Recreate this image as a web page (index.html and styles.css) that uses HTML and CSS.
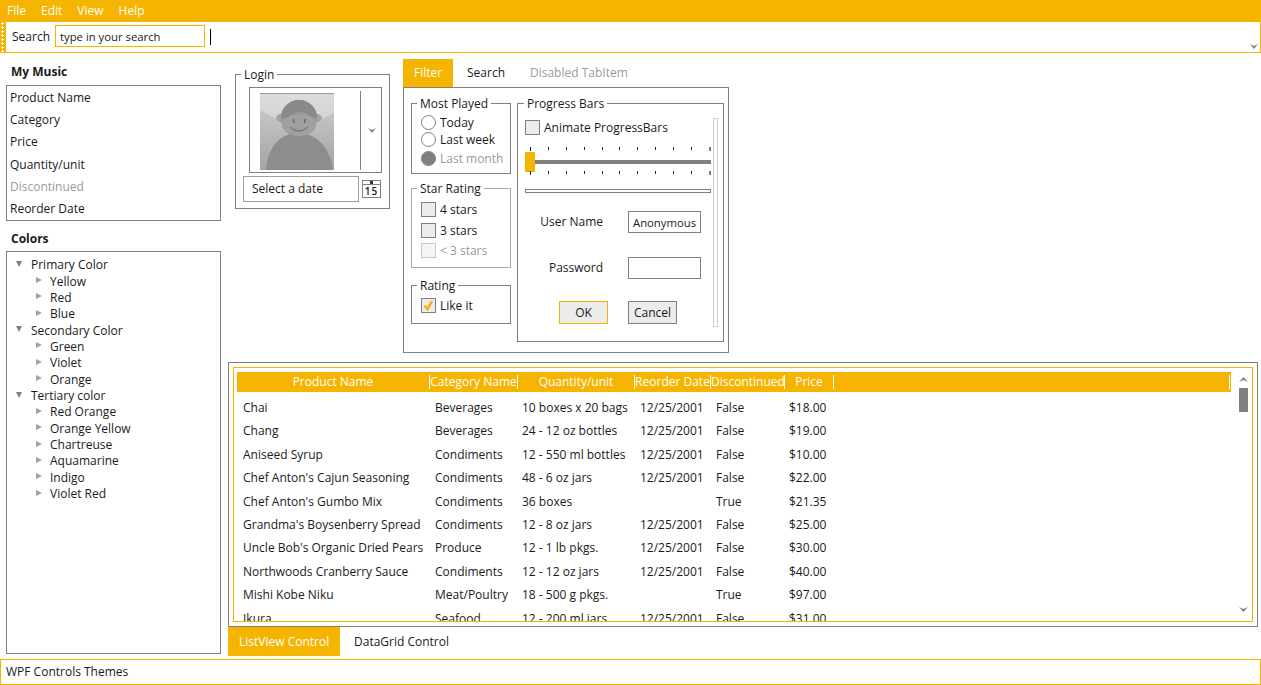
FILE: index.html
```html
<!DOCTYPE html>
<html lang="en">
<head>
<meta charset="utf-8">
<title>WPF Controls Themes</title>
<link rel="stylesheet" href="styles.css">
</head>
<body>
<div class="app">
  <nav class="menu"><span>File</span><span>Edit</span><span>View</span><span>Help</span></nav>
  <div class="toolbar">
    <div class="grip"></div>
    <label class="search-label">Search</label>
    <div class="search-box">type in your search</div>
    <div class="caret"></div>
    <svg class="tb-chevron" width="8" height="5" viewBox="0 0 8 5"><path d="M0 0 L4 2 L8 0 L4 5Z" fill="#808080"/></svg>
  </div>
  <main class="main">
    <aside class="side">
      <h2 class="side-title">My Music</h2>
      <ul class="listbox">
        <li>Product Name</li><li>Category</li><li>Price</li><li>Quantity/unit</li><li class="off">Discontinued</li><li>Reorder Date</li>
      </ul>
      <h2 class="side-title colors-title">Colors</h2>
      <div class="tree">
        <div class="node"><i class="tri-down"></i>Primary Color</div>
        <div class="node child"><i class="tri-right"></i>Yellow</div>
        <div class="node child"><i class="tri-right"></i>Red</div>
        <div class="node child"><i class="tri-right"></i>Blue</div>
        <div class="node"><i class="tri-down"></i>Secondary Color</div>
        <div class="node child"><i class="tri-right"></i>Green</div>
        <div class="node child"><i class="tri-right"></i>Violet</div>
        <div class="node child"><i class="tri-right"></i>Orange</div>
        <div class="node"><i class="tri-down"></i>Tertiary color</div>
        <div class="node child"><i class="tri-right"></i>Red Orange</div>
        <div class="node child"><i class="tri-right"></i>Orange Yellow</div>
        <div class="node child"><i class="tri-right"></i>Chartreuse</div>
        <div class="node child"><i class="tri-right"></i>Aquamarine</div>
        <div class="node child"><i class="tri-right"></i>Indigo</div>
        <div class="node child"><i class="tri-right"></i>Violet Red</div>
      </div>
    </aside>
    <section class="content">
      <div class="top-row">
        <fieldset class="group login">
          <legend>Login</legend>
          <div class="combo">
            <svg class="avatar" width="74" height="77" viewBox="0 0 74 77">
              <defs>
                <linearGradient id="bg" x1="0" y1="0" x2="0" y2="1"><stop offset="0" stop-color="#dcdcdc"/><stop offset="1" stop-color="#c4c4c4"/></linearGradient>
                <linearGradient id="bg2" x1="0" y1="0" x2="0" y2="1"><stop offset="0" stop-color="#c6c6c6"/><stop offset="1" stop-color="#a4a4a4"/></linearGradient>
              </defs>
              <rect width="74" height="77" fill="url(#bg)"/>
              <path d="M0 17 Q37 42 74 20 V77 H0Z" fill="url(#bg2)"/>
              <rect width="74" height="1" fill="#999"/>
              <path d="M6 77 C8 52 22 40 38 40 C54 40 70 52 73 77Z" fill="#8d8d8d"/>
              <ellipse cx="39" cy="25" rx="23" ry="7" fill="#a2a2a2"/>
              <circle cx="39" cy="25" r="18" fill="#979797"/>
              <path d="M21 25 A18 18 0 0 1 57 25 C50 25 45 16 36 19 C34 23 28 25 21 25Z" fill="#898989"/>
              <ellipse cx="39" cy="32" rx="17" ry="11" fill="#a0a0a0"/>
              <path d="M30 34 Q39 42 48 34" fill="none" stroke="#7a7a7a" stroke-width="1.200"/>
              <rect x="33" y="26" width="1.500" height="4" fill="#666"/>
              <rect x="44" y="26" width="1.500" height="4" fill="#666"/>
            </svg>
            <div class="combo-sep"></div>
            <svg class="combo-chevron" width="8" height="5" viewBox="0 0 8 5"><path d="M0 0 L4 2 L8 0 L4 5Z" fill="#808080"/></svg>
          </div>
          <div class="date-row">
            <div class="date-input">Select a date</div>
            <div class="calendar"><span class="cal-top"></span><span class="cal-num">15</span></div>
          </div>
        </fieldset>
        <div class="tabs">
          <div class="tab-strip"><span class="tab active">Filter</span><span class="tab">Search</span><span class="tab off">Disabled TabItem</span></div>
          <div class="tab-panel">
            <div class="panel-left">
              <fieldset class="group most">
                <legend>Most Played</legend>
                <div class="opt r1"><i class="radio"></i>Today</div>
                <div class="opt r2"><i class="radio"></i>Last week</div>
                <div class="opt r3 off"><i class="radio filled"></i>Last month</div>
              </fieldset>
              <fieldset class="group stars">
                <legend>Star Rating</legend>
                <div class="opt s1"><i class="check"></i>4 stars</div>
                <div class="opt s2"><i class="check"></i>3 stars</div>
                <div class="opt s3 off"><i class="check dim"></i>&lt; 3 stars</div>
              </fieldset>
              <fieldset class="group rating">
                <legend>Rating</legend>
                <div class="opt"><i class="check"><svg width="15" height="15" viewBox="0 0 15 15"><path d="M3.500 7.500 L6.500 11 L11 3" fill="none" stroke="#f5b400" stroke-width="2.500"/></svg></i>Like it</div>
              </fieldset>
            </div>
            <fieldset class="group progress">
              <legend>Progress Bars</legend>
              <div class="prog-wrap">
                <div class="prog-main">
                  <div class="opt animate"><i class="check"></i>Animate ProgressBars</div>
                  <div class="ticks t-top"><b></b><b></b><b></b><b></b><b></b><b></b><b></b><b></b><b></b><b></b><b class="end"></b></div>
                  <div class="slider"><span class="thumb"></span><span class="track"></span></div>
                  <div class="ticks t-bot"><b></b><b></b><b></b><b></b><b></b><b></b><b></b><b></b><b></b><b></b><b class="end"></b></div>
                  <div class="hbar"></div>
                  <div class="form">
                    <span class="f-label">User Name</span><div class="f-input">Anonymous</div>
                    <span class="f-label">Password</span><div class="f-input"></div>
                  </div>
                  <div class="buttons"><button class="btn ok">OK</button><button class="btn">Cancel</button></div>
                </div>
                <div class="vbar"></div>
              </div>
            </fieldset>
          </div>
        </div>
      </div>
      <div class="grid-outer">
        <div class="grid-inner">
          <div class="grid-area">
            <div class="grid-head">
              <span class="hc">Product Name</span><span class="hc">Category Name</span><span class="hc">Quantity/unit</span><span class="hc">Reorder Date</span><span class="hc">Discontinued</span><span class="hc">Price</span><span class="hc hc-last"></span>
            </div>
            <div class="rows">
              <div class="row"><span>Chai</span><span>Beverages</span><span>10 boxes x 20 bags</span><span>12/25/2001</span><span>False</span><span>$18.00</span></div>
              <div class="row"><span>Chang</span><span>Beverages</span><span>24 - 12 oz bottles</span><span>12/25/2001</span><span>False</span><span>$19.00</span></div>
              <div class="row"><span>Aniseed Syrup</span><span>Condiments</span><span>12 - 550 ml bottles</span><span>12/25/2001</span><span>False</span><span>$10.00</span></div>
              <div class="row"><span>Chef Anton's Cajun Seasoning</span><span>Condiments</span><span>48 - 6 oz jars</span><span>12/25/2001</span><span>False</span><span>$22.00</span></div>
              <div class="row"><span>Chef Anton's Gumbo Mix</span><span>Condiments</span><span>36 boxes</span><span></span><span>True</span><span>$21.35</span></div>
              <div class="row"><span>Grandma's Boysenberry Spread</span><span>Condiments</span><span>12 - 8 oz jars</span><span>12/25/2001</span><span>False</span><span>$25.00</span></div>
              <div class="row"><span>Uncle Bob's Organic Dried Pears</span><span>Produce</span><span>12 - 1 lb pkgs.</span><span>12/25/2001</span><span>False</span><span>$30.00</span></div>
              <div class="row"><span>Northwoods Cranberry Sauce</span><span>Condiments</span><span>12 - 12 oz jars</span><span>12/25/2001</span><span>False</span><span>$40.00</span></div>
              <div class="row"><span>Mishi Kobe Niku</span><span>Meat/Poultry</span><span>18 - 500 g pkgs.</span><span></span><span>True</span><span>$97.00</span></div>
              <div class="row"><span>Ikura</span><span>Seafood</span><span>12 - 200 ml jars</span><span>12/25/2001</span><span>False</span><span>$31.00</span></div>
            </div>
          </div>
          <div class="scrollbar">
            <svg width="9" height="5" viewBox="0 0 9 5"><path d="M0 5 L4.500 0 L9 5 L4.500 3Z" fill="#808080"/></svg>
            <span class="sb-thumb"></span>
            <svg class="sb-down" width="9" height="5" viewBox="0 0 9 5"><path d="M0 0 L4.500 2 L9 0 L4.500 5Z" fill="#808080"/></svg>
          </div>
        </div>
      </div>
      <div class="bottom-tabs"><span class="btab active">ListView Control</span><span class="btab">DataGrid Control</span></div>
    </section>
  </main>
  <footer class="status">WPF Controls Themes</footer>
</div>
</body>
</html>
```
FILE: styles.css
```css
* { box-sizing: border-box; }
html, body { margin: 0; height: 100%; }
body { font-family: "Open Sans", "Noto Sans", sans-serif; font-size: 12px; color: #1a1a1a; background: #fff; overflow: hidden; }
.app { width: 1261px; height: 685px; display: flex; flex-direction: column; }
.off { color: #9a9a9a; }

.menu { height: 22px; background: #f5b400; color: #fff; display: flex; align-items: center; padding: 0 0 1px 7px; gap: 15px; font-size: 12px; }

.toolbar { height: 31px; border-right: 1px solid #f5b400; border-bottom: 1px solid #f5b400; display: flex; align-items: center; position: relative; }
.grip { width: 6px; height: 30px; background: #f5b400 radial-gradient(circle at 2.500px 1.500px, #fff 1px, transparent 1.100px) 0 0 / 6px 4px; flex: none; }
.search-label { margin-left: 6px; width: 43px; font-size: 12px; margin-top: -2px; }
.search-box { width: 150px; height: 22px; border: 1px solid #f5b400; padding-left: 4px; line-height: 21px; font-size: 11.300px; margin-top: -2px; }
.caret { width: 1px; height: 16px; background: #000; margin-left: 5px; margin-top: -1px; }
.tb-chevron { position: absolute; right: 2px; bottom: 3px; }

.main { flex: 1; display: flex; min-height: 0; }
.side { width: 228px; flex: none; padding: 10px 0 5px 6px; display: flex; flex-direction: column; }
.side-title { margin: 0; font-size: 12px; font-weight: 700; height: 22px; line-height: 18px; padding-left: 5px; color: #1a1a1a; }
.colors-title { margin-top: 8px; height: 22px; line-height: 20px; }
.listbox { list-style: none; margin: 0; padding: 1px 0 0 3px; width: 215px; height: 136px; border: 1px solid #808080; }
.listbox li { height: 22.200px; line-height: 22px; }
.tree { width: 215px; flex: 1; border: 1px solid #808080; padding: 5px 0 0 0; }
.node { height: 16.370px; line-height: 16px; display: flex; align-items: center; padding-left: 9px; }
.node.child { padding-left: 29px; }
.tri-down { width: 0; height: 0; border-left: 3.500px solid transparent; border-right: 3.500px solid transparent; border-top: 6px solid #808080; margin-right: 9px; margin-top: -3px; }
.tri-right { width: 0; height: 0; border-top: 3.500px solid transparent; border-bottom: 3.500px solid transparent; border-left: 6px solid #a0a0a0; margin-right: 8px; margin-top: -3px; }

.content { flex: 1; min-width: 0; display: flex; flex-direction: column; }
.top-row { display: flex; height: 309px; flex: none; }

.group { margin: 0; border: 1px solid #808080; padding: 0; min-width: 0; }
.group legend { padding: 0 3px; margin-left: 5px; font-size: 12px; line-height: 17px; height: 17px; }

.login { width: 155px; height: 143px; margin: 13px 0 0 7px; padding: 4px 8px 0 7px; }
.login legend { margin-left: -2px; }
.combo { width: 133px; height: 86px; border: 1px solid #808080; margin-left: 6px; display: flex; align-items: center; padding-left: 10px; }
.avatar { flex: none; margin-top: 2px; }
.combo-sep { width: 1px; height: 79px; background: #808080; margin-left: 26px; }
.combo-chevron { margin-left: 7px; }
.date-row { display: flex; margin-top: 3px; gap: 3px; align-items: center; }
.date-input { width: 116px; height: 26px; border: 1px solid #a0a0a0; padding-left: 8px; line-height: 24px; font-size: 12px; }
.calendar { width: 19px; height: 18px; border: 1px solid #808080; display: flex; flex-direction: column; position: relative; }
.cal-top { height: 4px; border-bottom: 1px solid #808080; background: radial-gradient(circle at 50% 50%, #333 1.500px, transparent 1.600px); }
.cal-num { font-size: 10px; line-height: 12px; font-weight: 600; text-align: center; letter-spacing: 1px; }

.tabs { width: 326px; margin: 6px 0 0 13px; display: flex; flex-direction: column; }
.tab-strip { display: flex; height: 28px; }
.tab { padding: 0 11px 0 14px; line-height: 28px; }
.tab.active { background: #f5b400; color: #fff; padding: 0 11px; width: 50px; }
.tab:nth-child(2) { padding-left: 14px; padding-right: 14px; }
.tab:nth-child(3) { padding-left: 11px; }
.tab-panel { height: 266px; border: 1px solid #808080; display: flex; padding: 0 4px 0 7px; gap: 6px; }

.panel-left { width: 100px; flex: none; display: flex; flex-direction: column; padding-top: 7px; }
.opt { display: flex; align-items: center; gap: 4px; height: 18px; white-space: nowrap; }
.radio { width: 15px; height: 15px; border-radius: 50%; border: 1px solid #808080; background: #fff; margin-left: 9px; flex: none; }
.radio.filled { background: #808080; }
.check { width: 15px; height: 15px; border: 1px solid #808080; background: #ececec; margin-left: 9px; flex: none; display: block; line-height: 0; }
.check svg { margin: -1px; }
.check.dim { border-color: #c8c8c8; background: #f4f4f4; }
.most { height: 79px; }
.most .r1 { margin-top: 1px; }
.most .r2 { margin-top: -1px; }
.most .r3 { margin-top: 1px; }
.stars { height: 88px; margin-top: 6px; border-color: #a8a8a8; }
.stars .opt { height: 20.500px; }
.stars .s1 { margin-top: 2px; }
.stars .s2 { margin-top: 0.500px; }
.stars .s3 { margin-top: -0.500px; }
.rating { height: 47px; margin-top: 9px; }
.rating .opt { height: 21px; margin-top: 1px; }

.progress { width: 207px; height: 247px; margin-top: 7px; padding-left: 7px; }
.progress legend { margin-left: -1px; }
.prog-wrap { display: flex; gap: 2px; }
.prog-main { width: 186px; }
.animate { height: 20px; margin-top: 5px; }
.animate .check { margin-left: 0; margin-right: 0; }
.ticks { display: flex; justify-content: space-between; padding-left: 5px; height: 4px; }
.ticks b { width: 1px; height: 3px; background: #222; }
.ticks b:first-child { height: 4px; }
.ticks b.end { width: 2px; height: 4px; background: #808080; }
.t-top { margin-top: 10px; }
.t-bot { margin-top: 0; }
.slider { height: 20px; display: flex; align-items: center; margin-top: 1px; margin-bottom: -1px; }
.thumb { width: 10px; height: 20px; background: #f5b400; }
.track { flex: 1; height: 4px; background: #808080; }
.hbar { height: 4px; border: 1px solid #808080; margin-top: 14px; }
.form { display: grid; grid-template-columns: 78px 73px; column-gap: 25px; row-gap: 24px; align-items: center; margin-top: 18px; }
.f-label { text-align: right; margin-top: -2px; }
.f-input { height: 22px; border: 1px solid #808080; padding-left: 4px; line-height: 21px; white-space: nowrap; font-size: 11.300px; }
.buttons { display: flex; margin: 22px 0 0 34px; gap: 20px; }
.btn { width: 49px; height: 23px; padding: 0; font: inherit; color: inherit; background: #ececec; border: 1px solid #808080; }
.btn.ok { border-color: #f5b400; }
.vbar { width: 5px; height: 209px; margin-top: 6px; border: 1px solid #cfcfcf; }

.grid-outer { width: 1030px; height: 265px; border: 1px solid #808080; padding: 4px; flex: none; }
.grid-inner { height: 100%; border: 1px solid #f5b400; padding: 4px 0 0 3px; display: flex; overflow: hidden; }
.grid-area { width: 994px; flex: none; overflow: hidden; }
.grid-head { display: grid; grid-template-columns: 193px 88px 117px 76px 74px 49px 1fr; height: 20px; background: #f5b400; color: #fff; line-height: 19px; }
.row { display: grid; grid-template-columns: 192px 87px 118px 76px 73px 49px 1fr; height: 23.400px; line-height: 23px; }
.hc { text-align: center; border-right: 1px solid #fff; height: 14px; line-height: 14px; margin-top: 3px; white-space: nowrap; }
.hc-last { margin-right: 1px; }
.rows { padding-top: 4px; }
.row span { padding-left: 6px; white-space: nowrap; }
.scrollbar { width: 10px; margin-left: 7px; display: flex; flex-direction: column; align-items: center; padding-top: 5px; }
.sb-thumb { width: 9px; height: 24px; background: #808080; margin-top: 6px; }
.sb-down { margin-top: auto; margin-bottom: 9px; }

.bottom-tabs { display: flex; height: 29px; }
.btab { line-height: 29px; padding: 0 14px; white-space: nowrap; }
.btab.active { background: #f5b400; color: #fff; padding: 0 11px; width: 112px; }

.status { height: 26px; border: 1px solid #f5b400; padding-left: 5px; line-height: 24px; margin-top: 0; }
```
